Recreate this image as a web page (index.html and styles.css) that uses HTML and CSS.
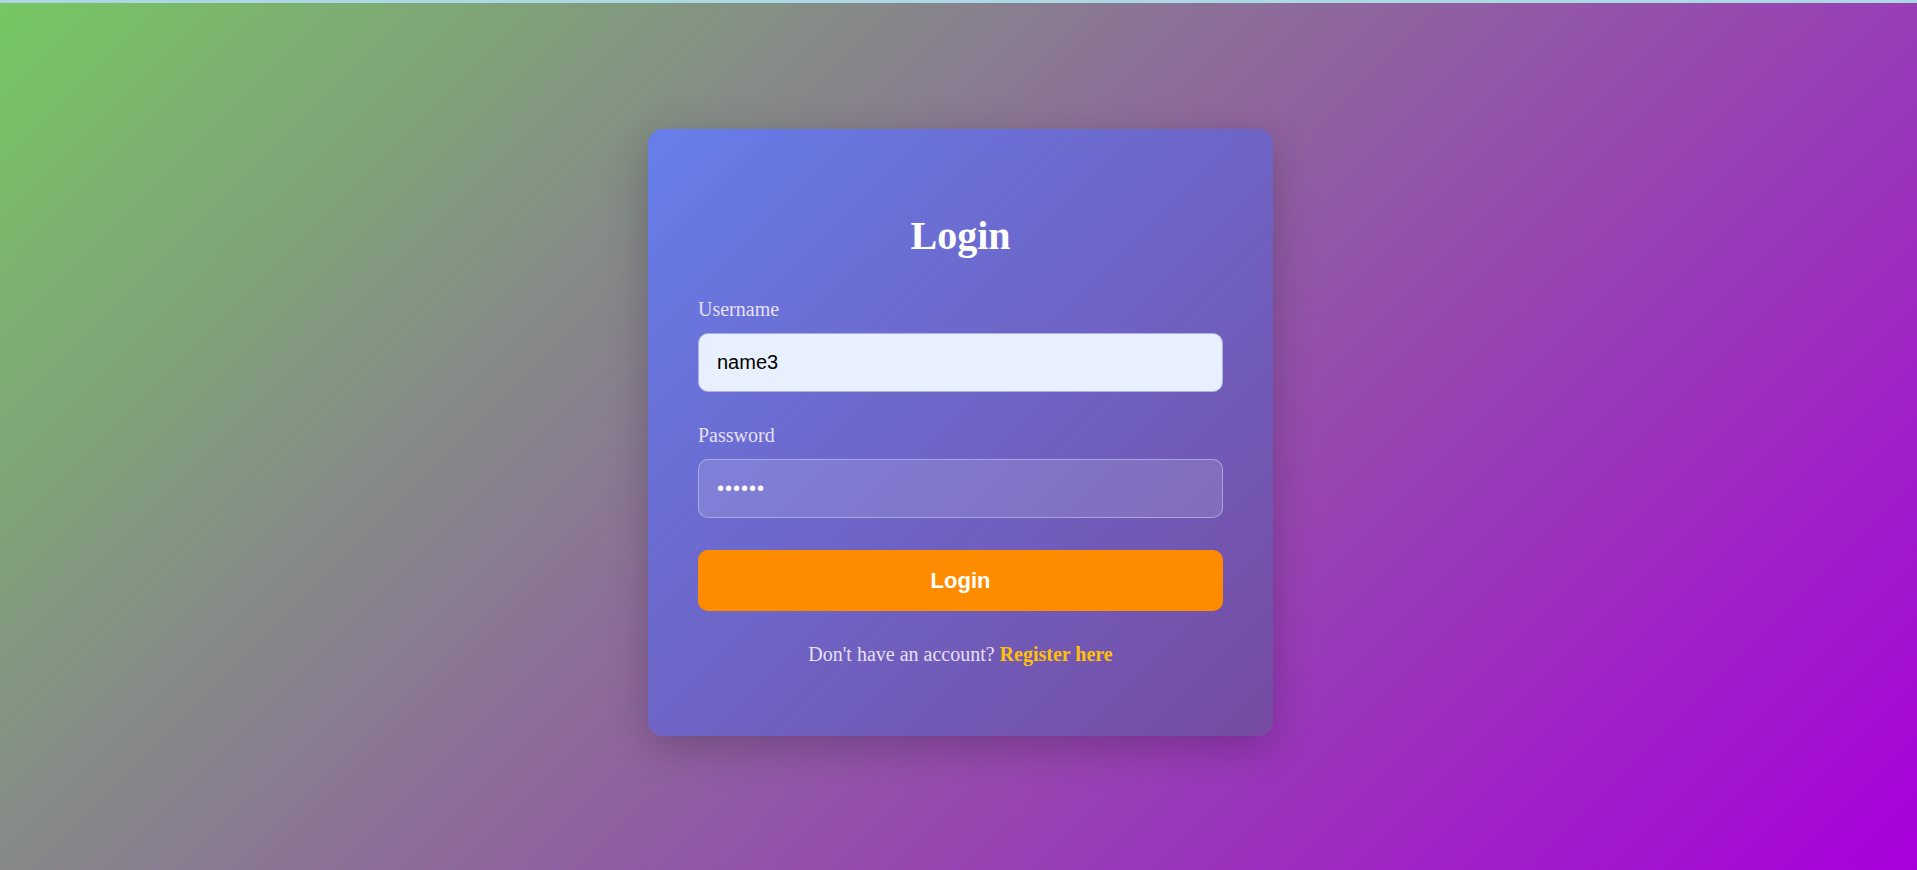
FILE: index.html
```html
<!DOCTYPE html>
<html lang="en">
<head>
<meta charset="utf-8">
<title>Login</title>
<link rel="stylesheet" href="styles.css">
</head>
<body>
<div class="top-strip"></div>
<main class="page">
  <section class="card">
    <h2 class="title">Login</h2>
    <form class="form">
      <div class="field">
        <label class="label" for="username">Username</label>
        <input class="input input-filled" id="username" type="text" value="name3">
      </div>
      <div class="field">
        <label class="label" for="password">Password</label>
        <input class="input input-glass" id="password" type="password" value="123456">
      </div>
      <button class="btn" type="button">Login</button>
    </form>
    <p class="footer">Don't have an account? <a class="link" href="#">Register here</a></p>
  </section>
</main>
</body>
</html>
```
FILE: styles.css
```css
* { box-sizing: border-box; }
html, body { margin: 0; padding: 0; height: 100%; }
body {
  font-family: "Liberation Serif", "Times New Roman", serif;
  background: linear-gradient(135deg, #76c762 0%, #a800dc 100%);
  min-height: 870px;
  overflow: hidden;
}
.top-strip {
  height: 3px;
  background: #acd8e4;
}
.page {
  display: flex;
  justify-content: center;
  align-items: flex-start;
  padding: 126px 0 0 4px;
}
.card {
  width: 625px;
  padding: 50px 50px 50px;
  border-radius: 15px;
  background: linear-gradient(135deg, #667eea 0%, #764ba2 100%);
  box-shadow: 0 12px 40px rgba(0, 0, 0, 0.22);
  color: #fff;
}
.title {
  margin: 33px 0 39px;
  font-size: 40px;
  font-weight: bold;
  text-align: center;
  color: #fff;
  line-height: normal;
}
.form {
  display: flex;
  flex-direction: column;
}
.field {
  display: flex;
  flex-direction: column;
  margin-bottom: 32px;
}
.label {
  font-size: 20px;
  line-height: 23px;
  color: #e6e0f2;
  margin-bottom: 12px;
}
.input {
  width: 100%;
  font-family: "Liberation Sans", Arial, sans-serif;
  font-size: 20px;
  line-height: 23px;
  padding: 17px 18px;
  border-radius: 10px;
  outline: none;
}
.input-filled {
  background: #e8f0fe;
  color: #000;
  border: 1px solid #a9b3dc;
}
.input-glass {
  background: rgba(255, 255, 255, 0.13);
  color: #fff;
  border: 1px solid rgba(190, 200, 240, 0.6);
  letter-spacing: 1px;
}
.btn {
  width: 100%;
  padding: 17px 0;
  border: none;
  border-radius: 10px;
  background: #ff8c00;
  color: #fff;
  font-family: "Liberation Sans", Arial, sans-serif;
  font-size: 22px;
  font-weight: bold;
  line-height: 27px;
  cursor: pointer;
}
.footer {
  margin: 32px 0 20px;
  text-align: center;
  font-size: 20px;
  line-height: 23px;
  color: #e6e0f2;
}
.link {
  color: #ffc107;
  font-weight: bold;
  text-decoration: none;
}
```
